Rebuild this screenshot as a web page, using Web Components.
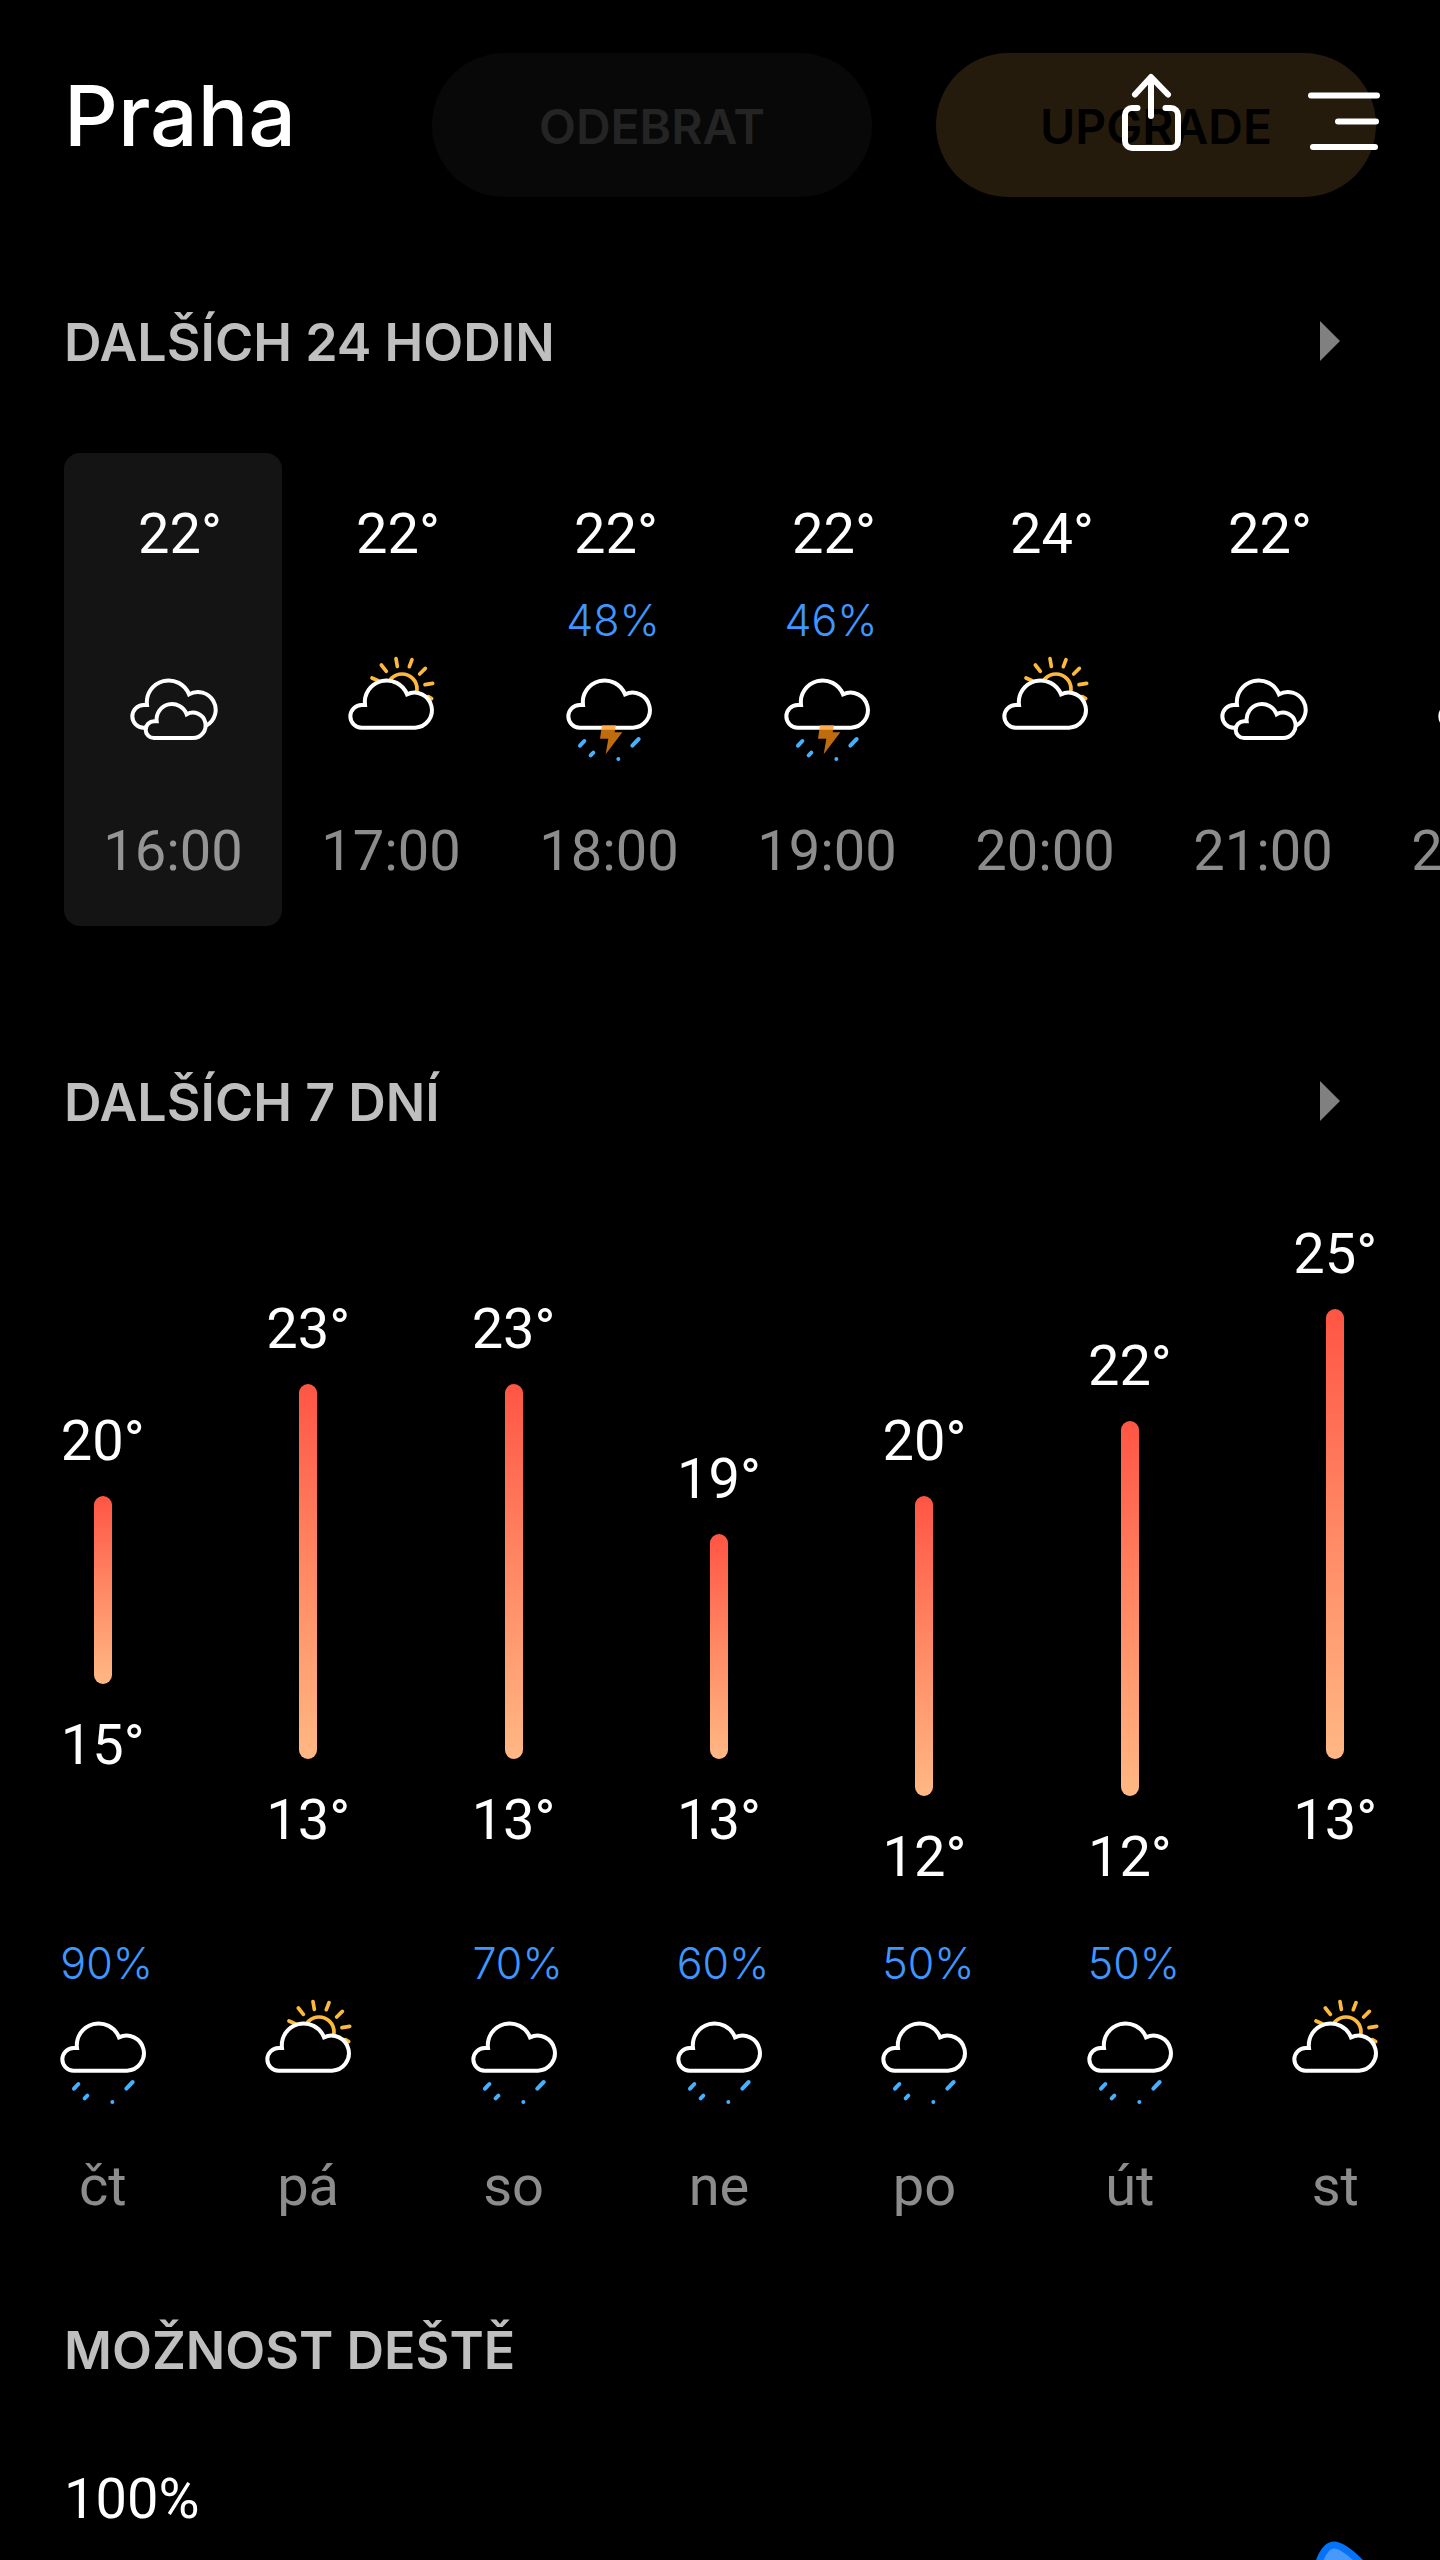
<!DOCTYPE html>
<html lang="cs">
<head>
<meta charset="UTF-8">
<meta name="viewport" content="width=device-width, initial-scale=1">
<title>Praha</title>
<style>
    :root {
        --bg: #000;
        --text: #fff;
        --heading: #bfbfbf;
        --muted: rgba(255,255,255,0.55);
        --blue: #3f96ff;
        --drop: #45b0ff;
        --sun: #fdb93c;
        --sans: Roboto, "Liberation Sans", sans-serif;
        --display: Inter, "Liberation Sans", sans-serif;
    }
    html, body { margin:0; background:var(--bg); }
    body { color:var(--text); font-family:var(--sans); overflow-x:hidden; }
</style>
</head>
<body>
<weather-app></weather-app>

<script>
// ===== WEATHER ICON =====
const CLOUD = 'M47 227a34 34 0 0 1 0-68h10A65.5 65.5 0 0 1 183 127A52.5 52.5 0 1 1 207 227Z';
const DROPS = '<path class="drop" d="M61 267L48 281M88 302L80 310M163 321v.1M224 261L205 281"/>';
const ICONS = {
    clouds: `
        <path class="cloud" d="M54 227h-7a34 34 0 0 1 0-68h10A65.5 65.5 0 0 1 183 127A52.5 52.5 0 0 1 236 220"/>
        <path class="cloud" d="M78 258a25 25 0 0 1 0-50h8A46.5 46.5 0 0 1 176 187A38 38 0 1 1 194 258Z"/>`,
    partly: `
        <circle class="sun" cx="168" cy="111" r="45"/>
        <path class="sun" d="M150 20L154 43M106 39L121 58M78 78L98 87M198 23L190 44M238 49L221 66M260 94L237 98M257 140L247 134"/>
        <path class="cloud solid" d="${CLOUD}"/>`,
    rain: `<path class="cloud" d="${CLOUD}"/>${DROPS}`,
    storm: `
        <path class="cloud" d="${CLOUD}"/>${DROPS}
        <path class="bolt" d="M114 219H156L152 241H175L125 307L133 260H108Z"/>`
};

customElements.define('weather-icon', class extends HTMLElement {
    connectedCallback() {
        this.attachShadow({ mode: 'open' });
        this.shadowRoot.innerHTML = `
            <style>
                :host { display:block; width:90px; height:116px; flex:none; }
                svg { display:block; width:100%; height:100%; fill:none; stroke-linecap:round; }
                .cloud { stroke:var(--text); stroke-width:12; }
                .solid { fill:var(--bg); }
                .sun { stroke:var(--sun); stroke-width:11; }
                .drop { stroke:var(--drop); stroke-width:12; }
                .bolt { fill:#ff9014; opacity:0.75; }
            </style>
            <svg viewBox="0 0 270 348" aria-hidden="true">${ICONS[this.getAttribute('name')] || ''}</svg>
        `;
    }
});

// ===== TOP BAR =====
customElements.define('top-bar', class extends HTMLElement {
    connectedCallback() {
        this.attachShadow({ mode: 'open' });
        this.shadowRoot.innerHTML = `
            <style>
                :host {
                    position:absolute; top:0; left:0; right:0; z-index:1;
                    display:flex; align-items:center; gap:104px;
                    box-sizing:border-box; height:232px; padding:0 52px 0 64px;
                    pointer-events:none;
                }
                h1 { margin:0 auto 0 0; font:500 84px/96px var(--display); }
                button { width:88px; height:88px; padding:0; border:0; background:none; color:inherit; pointer-events:auto; }
                svg { display:block; width:88px; height:88px; fill:none; stroke:currentColor; stroke-width:6; stroke-linecap:round; stroke-linejoin:round; }
            </style>
            <h1><slot></slot></h1>
            <button type="button" aria-label="Sdílet">
                <svg viewBox="0 0 88 88"><path d="M43 6V44M27 22.500L43 5L60 22.500M29.500 36H24a7 7 0 0 0-7 7V69a7 7 0 0 0 7 7H63a7 7 0 0 0 7-7V43a7 7 0 0 0-7-7H57.500"/></svg>
            </button>
            <button type="button" aria-label="Nabídka">
                <svg viewBox="0 0 88 88"><path d="M11 23.500H77M38 49.500H76M13 75H75"/></svg>
            </button>
        `;
    }
});

// ===== PILL BUTTON =====
customElements.define('pill-button', class extends HTMLElement {
    connectedCallback() {
        this.attachShadow({ mode: 'open' });
        this.shadowRoot.innerHTML = `
            <style>
                :host { display:block; flex:0 1 440px; }
                button {
                    width:100%; height:144px; padding:4px 0 0; border:0; border-radius:72px;
                    background:#080808; color:#242424;
                    font:600 48px/56px var(--display);
                }
                :host([gold]) button { background:#251b0c; color:#000; }
            </style>
            <button type="button"><slot></slot></button>
        `;
    }
});

// ===== SECTION TITLE =====
customElements.define('section-title', class extends HTMLElement {
    connectedCallback() {
        this.attachShadow({ mode: 'open' });
        this.shadowRoot.innerHTML = `
            <style>
                :host { display:flex; align-items:center; justify-content:space-between; padding:0 100px 0 64px; }
                h2 { margin:0; color:var(--heading); font:600 52px/60px var(--display); }
                svg { display:none; width:20px; height:40px; margin-bottom:4px; fill:#808080; }
                :host([more]) svg { display:block; }
            </style>
            <h2><slot></slot></h2>
            <svg viewBox="0 0 20 40" aria-hidden="true"><path d="M0 0L20 20L0 40Z"/></svg>
        `;
    }
});

// ===== HOUR =====
customElements.define('hour-card', class extends HTMLElement {
    connectedCallback() {
        const get = name => this.getAttribute(name) || '';
        this.attachShadow({ mode: 'open' });
        this.shadowRoot.innerHTML = `
            <style>
                :host {
                    display:flex; flex-direction:column; align-items:center; flex:none;
                    box-sizing:border-box; width:218px; padding:53px 0 47px; border-radius:16px;
                    font-size:56px; line-height:56px;
                }
                :host([active]) { background:#141414; }
                .temp { height:56px; padding-left:14px; }
                .rain { height:42px; margin:37px 0 11px; padding-left:8px; color:var(--blue); font:300 43px/42px var(--display); }
                .time { margin-top:55px; color:var(--muted); }
            </style>
            <div class="temp">${get('temp')}</div>
            <div class="rain">${get('rain')}</div>
            <weather-icon name="${get('icon')}"></weather-icon>
            <div class="time">${get('time')}</div>
        `;
    }
});

// ===== DAY =====
const SCALE_TOP = 25, SCALE_BOTTOM = 12;

customElements.define('day-column', class extends HTMLElement {
    connectedCallback() {
        const get = name => this.getAttribute(name) || '';
        const hi = Number(get('hi')), lo = Number(get('lo'));
        this.attachShadow({ mode: 'open' });
        this.shadowRoot.innerHTML = `
            <style>
                :host { display:flex; flex-direction:column; align-items:center; font-size:56px; line-height:56px; }
                .range { display:flex; flex-direction:column; align-items:center; height:659px; }
                .above { flex:${SCALE_TOP - hi} 0 0; }
                .below { flex:${lo - SCALE_BOTTOM} 0 0; }
                .bar {
                    flex:${hi - lo} 0 0;
                    width:18px; margin:27px 0 33px; border-radius:9px;
                    background:linear-gradient(#ff5544, #ff8462 45%, #ffb884);
                }
                .rain { height:42px; margin:57px 0 11px; padding-left:8px; color:var(--blue); font:300 43px/42px var(--display); }
                .day { margin-top:47px; color:var(--muted); }
            </style>
            <div class="range">
                <div class="above"></div>
                <div>${hi}°</div>
                <div class="bar"></div>
                <div>${lo}°</div>
                <div class="below"></div>
            </div>
            <div class="rain">${get('rain')}</div>
            <weather-icon name="${get('icon')}"></weather-icon>
            <div class="day">${get('day')}</div>
        `;
    }
});

// ===== RAIN CHART =====
customElements.define('rain-chart', class extends HTMLElement {
    connectedCallback() {
        this.attachShadow({ mode: 'open' });
        this.shadowRoot.innerHTML = `
            <style>
                :host { display:block; padding:0 72px 0 64px; font-size:56px; line-height:56px; }
                svg { display:block; width:60px; height:33px; margin-left:auto; fill:#4799fb; stroke:#0572f8; stroke-width:7; }
            </style>
            <div><slot></slot></div>
            <svg viewBox="0 0 60 33" aria-hidden="true"><path d="M6 50L11 35C15 24 20 18 26 18C33 18 42 25 52 35L64 50Z"/></svg>
        `;
    }
});

// ===== APP =====
customElements.define('weather-app', class extends HTMLElement {
    connectedCallback() {
        this.attachShadow({ mode: 'open' });
        this.shadowRoot.innerHTML = `
            <style>
                :host { display:block; position:relative; }
                .actions { display:flex; justify-content:flex-end; gap:64px; padding:53px 64px 116px; }
                .hours { display:flex; overflow:hidden; margin:80px 0 147px; padding-left:64px; }
                .days { display:grid; grid-template-columns:repeat(7, 1fr); margin:93px 0 107px; padding-right:2px; }
                rain-chart { margin-top:90px; }
            </style>
            <top-bar>Praha</top-bar>
            <div class="actions">
                <pill-button>ODEBRAT</pill-button>
                <pill-button gold>UPGRADE</pill-button>
            </div>
            <section>
                <section-title more>DALŠÍCH 24 HODIN</section-title>
                <div class="hours">
                    <hour-card active temp="22°" icon="clouds" time="16:00"></hour-card>
                    <hour-card temp="22°" icon="partly" time="17:00"></hour-card>
                    <hour-card temp="22°" rain="48%" icon="storm" time="18:00"></hour-card>
                    <hour-card temp="22°" rain="46%" icon="storm" time="19:00"></hour-card>
                    <hour-card temp="24°" icon="partly" time="20:00"></hour-card>
                    <hour-card temp="22°" icon="clouds" time="21:00"></hour-card>
                    <hour-card icon="clouds" time="22:00"></hour-card>
                </div>
            </section>
            <section>
                <section-title more>DALŠÍCH 7 DNÍ</section-title>
                <div class="days">
                    <day-column hi="20" lo="15" rain="90%" icon="rain" day="čt"></day-column>
                    <day-column hi="23" lo="13" icon="partly" day="pá"></day-column>
                    <day-column hi="23" lo="13" rain="70%" icon="rain" day="so"></day-column>
                    <day-column hi="19" lo="13" rain="60%" icon="rain" day="ne"></day-column>
                    <day-column hi="20" lo="12" rain="50%" icon="rain" day="po"></day-column>
                    <day-column hi="22" lo="12" rain="50%" icon="rain" day="út"></day-column>
                    <day-column hi="25" lo="13" icon="partly" day="st"></day-column>
                </div>
            </section>
            <section>
                <section-title>MOŽNOST DEŠTĚ</section-title>
                <rain-chart>100%</rain-chart>
            </section>
        `;
    }
});
</script>
</body>
</html>
